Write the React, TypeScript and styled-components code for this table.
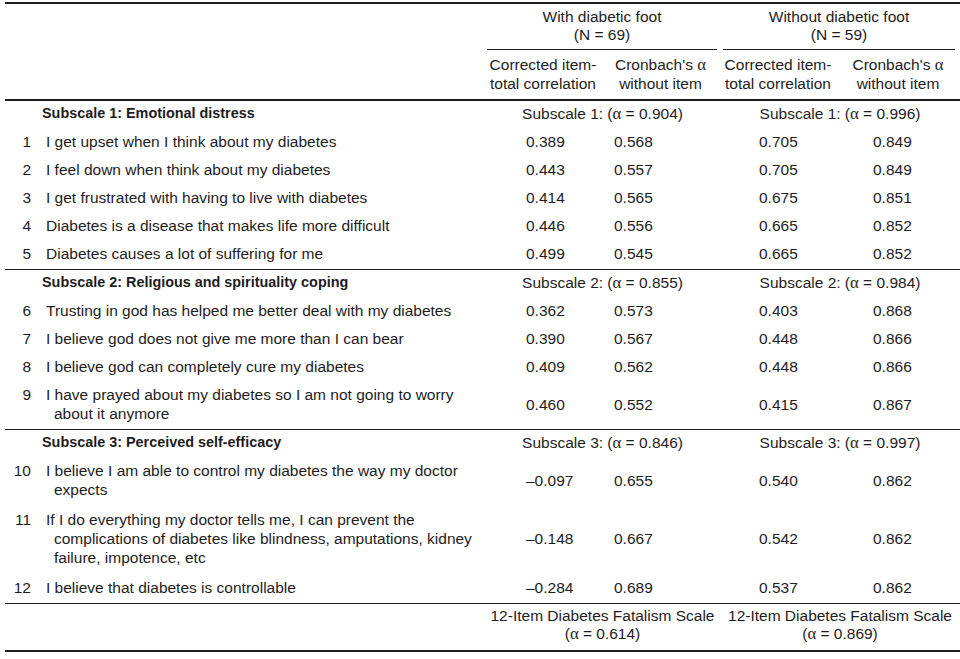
import React from "react";
import styled, { createGlobalStyle } from "styled-components";

const Global = createGlobalStyle`
  html, body { margin: 0; padding: 0; background: #ffffff; }
  body {
    font-family: "Liberation Sans", Arial, sans-serif;
    color: #1e1c1d;
    font-size: 15.5px;
  }
`;

const Table = styled.table`
  margin: 2px 0 0 5px;
  width: 955px;
  table-layout: fixed;
  border-collapse: collapse;
  border-top: 2px solid #1e1c1d;
  border-bottom: 2px solid #1e1c1d;
`;

const HeadRow = styled.tr<{ $last?: boolean }>`
  ${(p) => (p.$last ? "border-bottom: 2px solid #1e1c1d;" : "")}
`;

const GroupTh = styled.th`
  padding: 0;
  font-weight: normal;
  vertical-align: bottom;
`;

const GroupLabel = styled.div<{ $ml: number; $mr: number }>`
  margin: 0 ${(p) => p.$mr}px 0 ${(p) => p.$ml}px;
  padding: 4px 0 5px;
  line-height: 18px;
  text-align: center;
  border-bottom: 1px solid #1e1c1d;
`;

const SubTh = styled.th`
  padding: 5px 0 6px;
  font-weight: normal;
  line-height: 19px;
  text-align: center;
  white-space: nowrap;
`;

const Alpha = styled.span`
  font-family: "Liberation Serif", "Times New Roman", serif;
  font-size: 1.08em;
  line-height: 1;
`;

const Row = styled.tr<{ $sep?: boolean; $pt?: number; $pb?: number }>`
  ${(p) => (p.$sep ? "border-top: 1px solid #1e1c1d;" : "")}
  ${(p) => (p.$pt !== undefined ? `& > td { padding-top: ${p.$pt}px; }` : "")}
  ${(p) => (p.$pb !== undefined ? `& > td { padding-bottom: ${p.$pb}px; }` : "")}
`;

const NumCell = styled.td`
  padding: 3px 5px 6px 0;
  line-height: 19px;
  text-align: right;
  vertical-align: top;
`;

const TextCell = styled.td`
  padding: 3px 0 6px 18px;
  text-indent: -8px;
  line-height: 19px;
  vertical-align: top;
  white-space: nowrap;
`;

const SubscaleTitle = styled.td`
  padding: 3px 0 6px 37px;
  line-height: 19px;
  font-weight: bold;
  font-size: 14.4px;
  white-space: nowrap;
`;

const SubscaleAlpha = styled.td`
  padding: 3px 0 6px;
  line-height: 19px;
  text-align: center;
  white-space: nowrap;
`;

const Val = styled.td<{ $pl: number }>`
  padding: 3px 0 6px ${(p) => p.$pl}px;
  line-height: 19px;
  vertical-align: middle;
  white-space: nowrap;
`;

const FootCell = styled.td`
  padding: 3px 0 7px;
  line-height: 18px;
  text-align: center;
  white-space: nowrap;
`;

const A = () => <Alpha>α</Alpha>;

type Item = {
  n: number;
  lines: string[];
  v: [string, string, string, string];
  pt?: number;
  pb?: number;
};
type Block = { title: string; a1: string; a2: string; items: Item[] };

const blocks: Block[] = [
  {
    title: "Subscale 1: Emotional distress",
    a1: "0.904",
    a2: "0.996",
    items: [
      { n: 1, lines: ["I get upset when I think about my diabetes"], v: ["0.389", "0.568", "0.705", "0.849"] },
      { n: 2, lines: ["I feel down when think about my diabetes"], v: ["0.443", "0.557", "0.705", "0.849"] },
      { n: 3, lines: ["I get frustrated with having to live with diabetes"], v: ["0.414", "0.565", "0.675", "0.851"] },
      { n: 4, lines: ["Diabetes is a disease that makes life more difficult"], v: ["0.446", "0.556", "0.665", "0.852"] },
      { n: 5, lines: ["Diabetes causes a lot of suffering for me"], v: ["0.499", "0.545", "0.665", "0.852"] },
    ],
  },
  {
    title: "Subscale 2: Religious and spirituality coping",
    a1: "0.855",
    a2: "0.984",
    items: [
      { n: 6, lines: ["Trusting in god has helped me better deal with my diabetes"], v: ["0.362", "0.573", "0.403", "0.868"] },
      { n: 7, lines: ["I believe god does not give me more than I can bear"], v: ["0.390", "0.567", "0.448", "0.866"] },
      { n: 8, lines: ["I believe god can completely cure my diabetes"], v: ["0.409", "0.562", "0.448", "0.866"] },
      {
        n: 9,
        lines: ["I have prayed about my diabetes so I am not going to worry", "about it anymore"],
        v: ["0.460", "0.552", "0.415", "0.867"],
      },
    ],
  },
  {
    title: "Subscale 3: Perceived self-efficacy",
    a1: "0.846",
    a2: "0.997",
    items: [
      {
        n: 10,
        lines: ["I believe I am able to control my diabetes the way my doctor", "expects"],
        v: ["–0.097", "0.655", "0.540", "0.862"],
        pb: 8,
      },
      {
        n: 11,
        lines: [
          "If I do everything my doctor tells me, I can prevent the",
          "complications of diabetes like blindness, amputations, kidney",
          "failure, impotence, etc",
        ],
        v: ["–0.148", "0.667", "0.542", "0.862"],
        pb: 8,
      },
      {
        n: 12,
        lines: ["I believe that diabetes is controllable"],
        v: ["–0.284", "0.689", "0.537", "0.862"],
        pt: 3,
      },
    ],
  },
];

const pads = [41, 13, 39, 37];

export default function App() {
  return (
    <>
      <Global />
      <Table>
        <colgroup>
          <col style={{ width: 31 }} />
          <col style={{ width: 449 }} />
          <col style={{ width: 116 }} />
          <col style={{ width: 119 }} />
          <col style={{ width: 116 }} />
          <col style={{ width: 124 }} />
        </colgroup>
        <thead>
          <HeadRow>
            <th colSpan={2} rowSpan={2} />
            <GroupTh colSpan={2}>
              <GroupLabel $ml={2} $mr={3}>
                With diabetic foot
                <br />
                (N = 69)
              </GroupLabel>
            </GroupTh>
            <GroupTh colSpan={2}>
              <GroupLabel $ml={3} $mr={5}>
                Without diabetic foot
                <br />
                (N = 59)
              </GroupLabel>
            </GroupTh>
          </HeadRow>
          <HeadRow $last>
            <SubTh>
              Corrected item-
              <br />
              total correlation
            </SubTh>
            <SubTh>
              Cronbach's <A />
              <br />
              without item
            </SubTh>
            <SubTh>
              Corrected item-
              <br />
              total correlation
            </SubTh>
            <SubTh>
              Cronbach's <A />
              <br />
              without item
            </SubTh>
          </HeadRow>
        </thead>
        <tbody>
          {blocks.map((b, bi) => (
            <React.Fragment key={b.title}>
              <Row $sep={bi > 0}>
                <SubscaleTitle colSpan={2}>{b.title}</SubscaleTitle>
                <SubscaleAlpha colSpan={2}>
                  Subscale {bi + 1}: (<A /> = {b.a1})
                </SubscaleAlpha>
                <SubscaleAlpha colSpan={2}>
                  Subscale {bi + 1}: (<A /> = {b.a2})
                </SubscaleAlpha>
              </Row>
              {b.items.map((it) => (
                <Row key={it.n} $pt={it.pt} $pb={it.pb}>
                  <NumCell>{it.n}</NumCell>
                  <TextCell>
                    {it.lines.map((l, i) => (
                      <React.Fragment key={i}>
                        {i > 0 && <br />}
                        {l}
                      </React.Fragment>
                    ))}
                  </TextCell>
                  {it.v.map((v, i) => (
                    <Val key={i} $pl={pads[i]}>
                      {v}
                    </Val>
                  ))}
                </Row>
              ))}
            </React.Fragment>
          ))}
          <Row $sep>
            <td colSpan={2} />
            <FootCell colSpan={2}>
              12-Item Diabetes Fatalism Scale
              <br />
              (<A /> = 0.614)
            </FootCell>
            <FootCell colSpan={2}>
              12-Item Diabetes Fatalism Scale
              <br />
              (<A /> = 0.869)
            </FootCell>
          </Row>
        </tbody>
      </Table>
    </>
  );
}
